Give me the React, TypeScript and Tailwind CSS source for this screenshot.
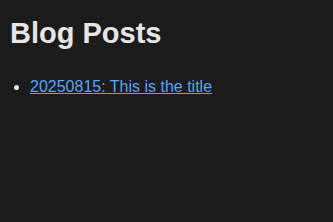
export default function App() {
  return (
    <div className="min-h-screen bg-[#1b1b1b] p-[10px] text-[#e6e6e6] font-['Liberation_Sans',Arial,sans-serif]">
      <h1 className="text-[29px] font-bold leading-[32px] mt-[7px]">Blog Posts</h1>
      <ul className="list-disc pl-5 mt-[26px] text-[16px] leading-[24px]">
        <li>
          <a href="#" className="text-[#58a6ff] underline">20250815: This is the title</a>
        </li>
      </ul>
    </div>
  )
}
